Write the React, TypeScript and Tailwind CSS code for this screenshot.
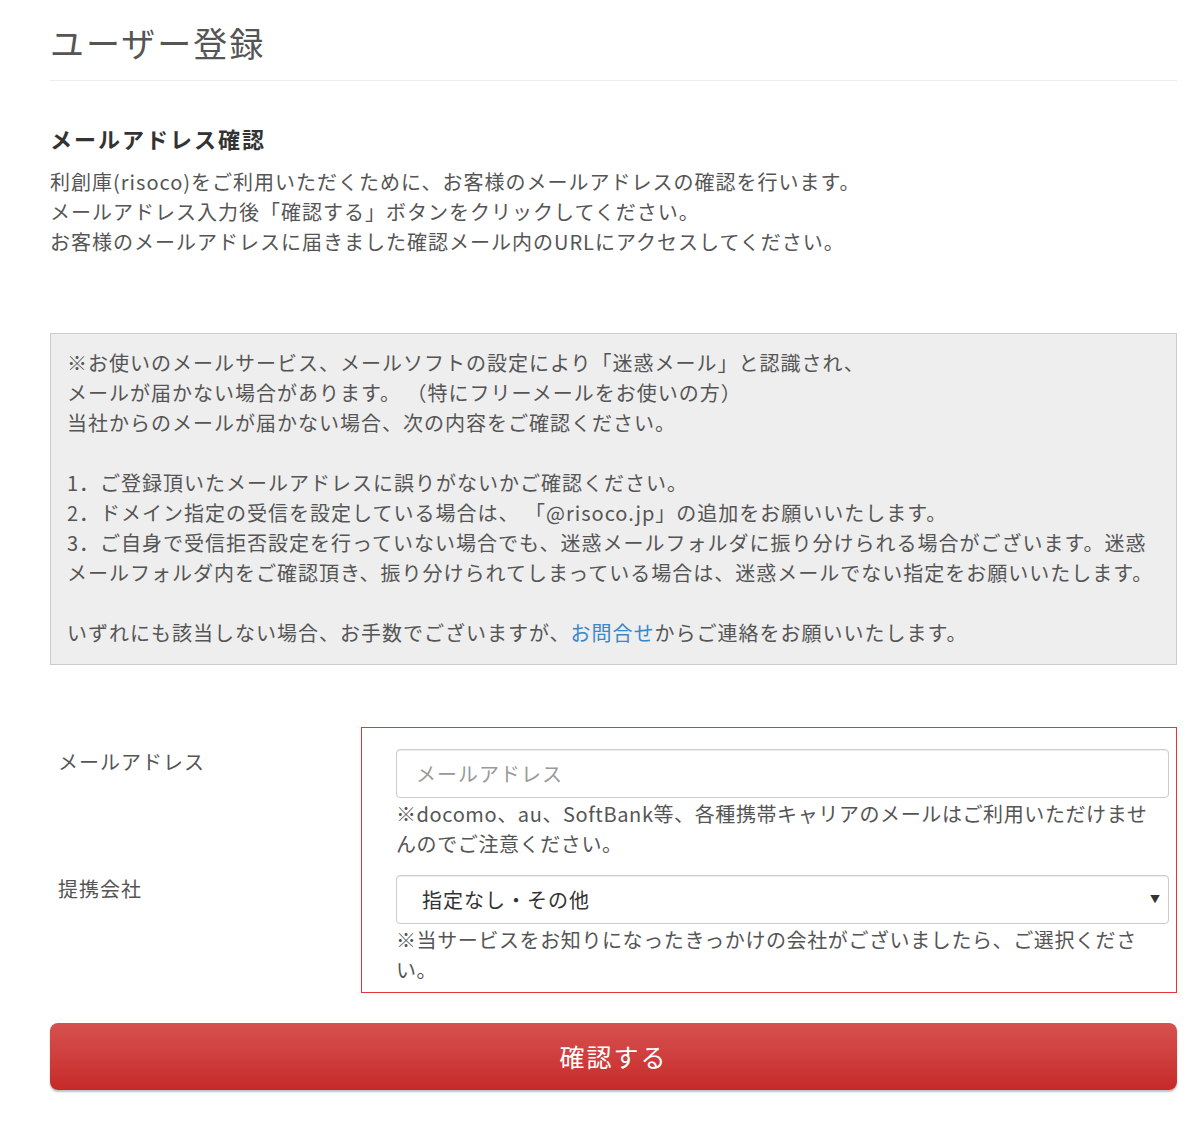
import React from "react";

const font = { fontFamily: "'Noto Sans CJK JP', 'Noto Sans', sans-serif" };

export default function App() {
  const boxLines: React.ReactNode[] = [
    "※お使いのメールサービス、メールソフトの設定により「迷惑メール」と認識され、",
    "メールが届かない場合があります。 （特にフリーメールをお使いの方）",
    "当社からのメールが届かない場合、次の内容をご確認ください。",
    "",
    "1．ご登録頂いたメールアドレスに誤りがないかご確認ください。",
    "2．ドメイン指定の受信を設定している場合は、 「@risoco.jp」の追加をお願いいたします。",
    "3．ご自身で受信拒否設定を行っていない場合でも、迷惑メールフォルダに振り分けられる場合がございます。迷惑",
    "メールフォルダ内をご確認頂き、振り分けられてしまっている場合は、迷惑メールでない指定をお願いいたします。",
    "",
    <>
      いずれにも該当しない場合、お手数でございますが、
      <a href="#" className="text-[#3a87c8]">お問合せ</a>
      からご連絡をお願いいたします。
    </>,
  ];

  return (
    <div className="min-h-[1134px] bg-white" style={font}>
      <div className="ml-[50px] w-[1127px] pt-[21px] pb-[40px]">
        <h1 className="text-[34px] leading-[44px] tracking-[2px] font-normal text-[#555]">
          ユーザー登録
        </h1>
        <div className="mt-[15px] border-t border-[#eee]" />

        <h2 className="mt-[41px] text-[22px] leading-[32px] tracking-[2px] font-bold text-[#333]">
          メールアドレス確認
        </h2>
        <div className="mt-[13px] text-[20px] leading-[30px] tracking-[1px] text-[#555]">
          <p>利創庫(risoco)をご利用いただくために、お客様のメールアドレスの確認を行います。</p>
          <p>メールアドレス入力後「確認する」ボタンをクリックしてください。</p>
          <p>お客様のメールアドレスに届きました確認メール内のURLにアクセスしてください。</p>
        </div>

        <div className="mt-[76px] border border-[#ccc] bg-[#eee] pl-[16px] pr-[8px] pt-[14px] pb-[16px] text-[20px] leading-[30px] tracking-[1px] text-[#555]">
          {boxLines.map((l, i) => (
            <div key={i} className="h-[30px] whitespace-pre">
              {l}
            </div>
          ))}
        </div>

        <div className="mt-[62px] flex">
          <div className="w-[311px] shrink-0 pl-[8px] text-[20px] leading-[30px] tracking-[1px] text-[#555]">
            <div className="mt-[20px]">メールアドレス</div>
            <div className="mt-[97px]">提携会社</div>
          </div>
          <div className="flex-1 border border-[#e8353a] pl-[34px] pr-[7px] pt-[21px] pb-[7px]">
            <input
              type="text"
              placeholder="メールアドレス"
              className="block h-[49px] w-full rounded-[4px] border border-[#ccc] bg-white pl-[19px] text-[20px] tracking-[1px] text-[#333] placeholder:text-[#999] shadow-[inset_0_1px_1px_rgba(0,0,0,0.075)] outline-none"
              style={font}
            />
            <div className="mt-[1px] text-[20px] leading-[30px] tracking-[0.6px] text-[#555] whitespace-nowrap">
              ※docomo、au、SoftBank等、各種携帯キャリアのメールはご利用いただけませ
              <br />
              んのでご注意ください。
            </div>
            <div className="relative mt-[16px] h-[49px] w-full rounded-[4px] border border-[#ccc] bg-white shadow-[inset_0_1px_1px_rgba(0,0,0,0.075)]">
              <select
                className="h-full w-full appearance-none bg-transparent pl-[25px] text-[20px] tracking-[1px] text-[#333] outline-none"
                style={font}
                defaultValue="none"
              >
                <option value="none">指定なし・その他</option>
              </select>
              <span className="pointer-events-none absolute right-[8px] top-[15px] text-[10px] text-[#333]">
                ▼
              </span>
            </div>
            <div className="mt-[1px] text-[20px] leading-[30px] tracking-[0.6px] text-[#555] whitespace-nowrap">
              ※当サービスをお知りになったきっかけの会社がございましたら、ご選択くださ
              <br />
              い。
            </div>
          </div>
        </div>

        <button
          className="mt-[30px] flex h-[67px] w-full items-center justify-center rounded-[8px] bg-gradient-to-b from-[#d6514f] to-[#c62828] text-[25px] tracking-[2px] text-white shadow-[0_2px_2px_rgba(0,0,0,0.25)]"
          style={font}
        >
          確認する
        </button>
      </div>
    </div>
  );
}
